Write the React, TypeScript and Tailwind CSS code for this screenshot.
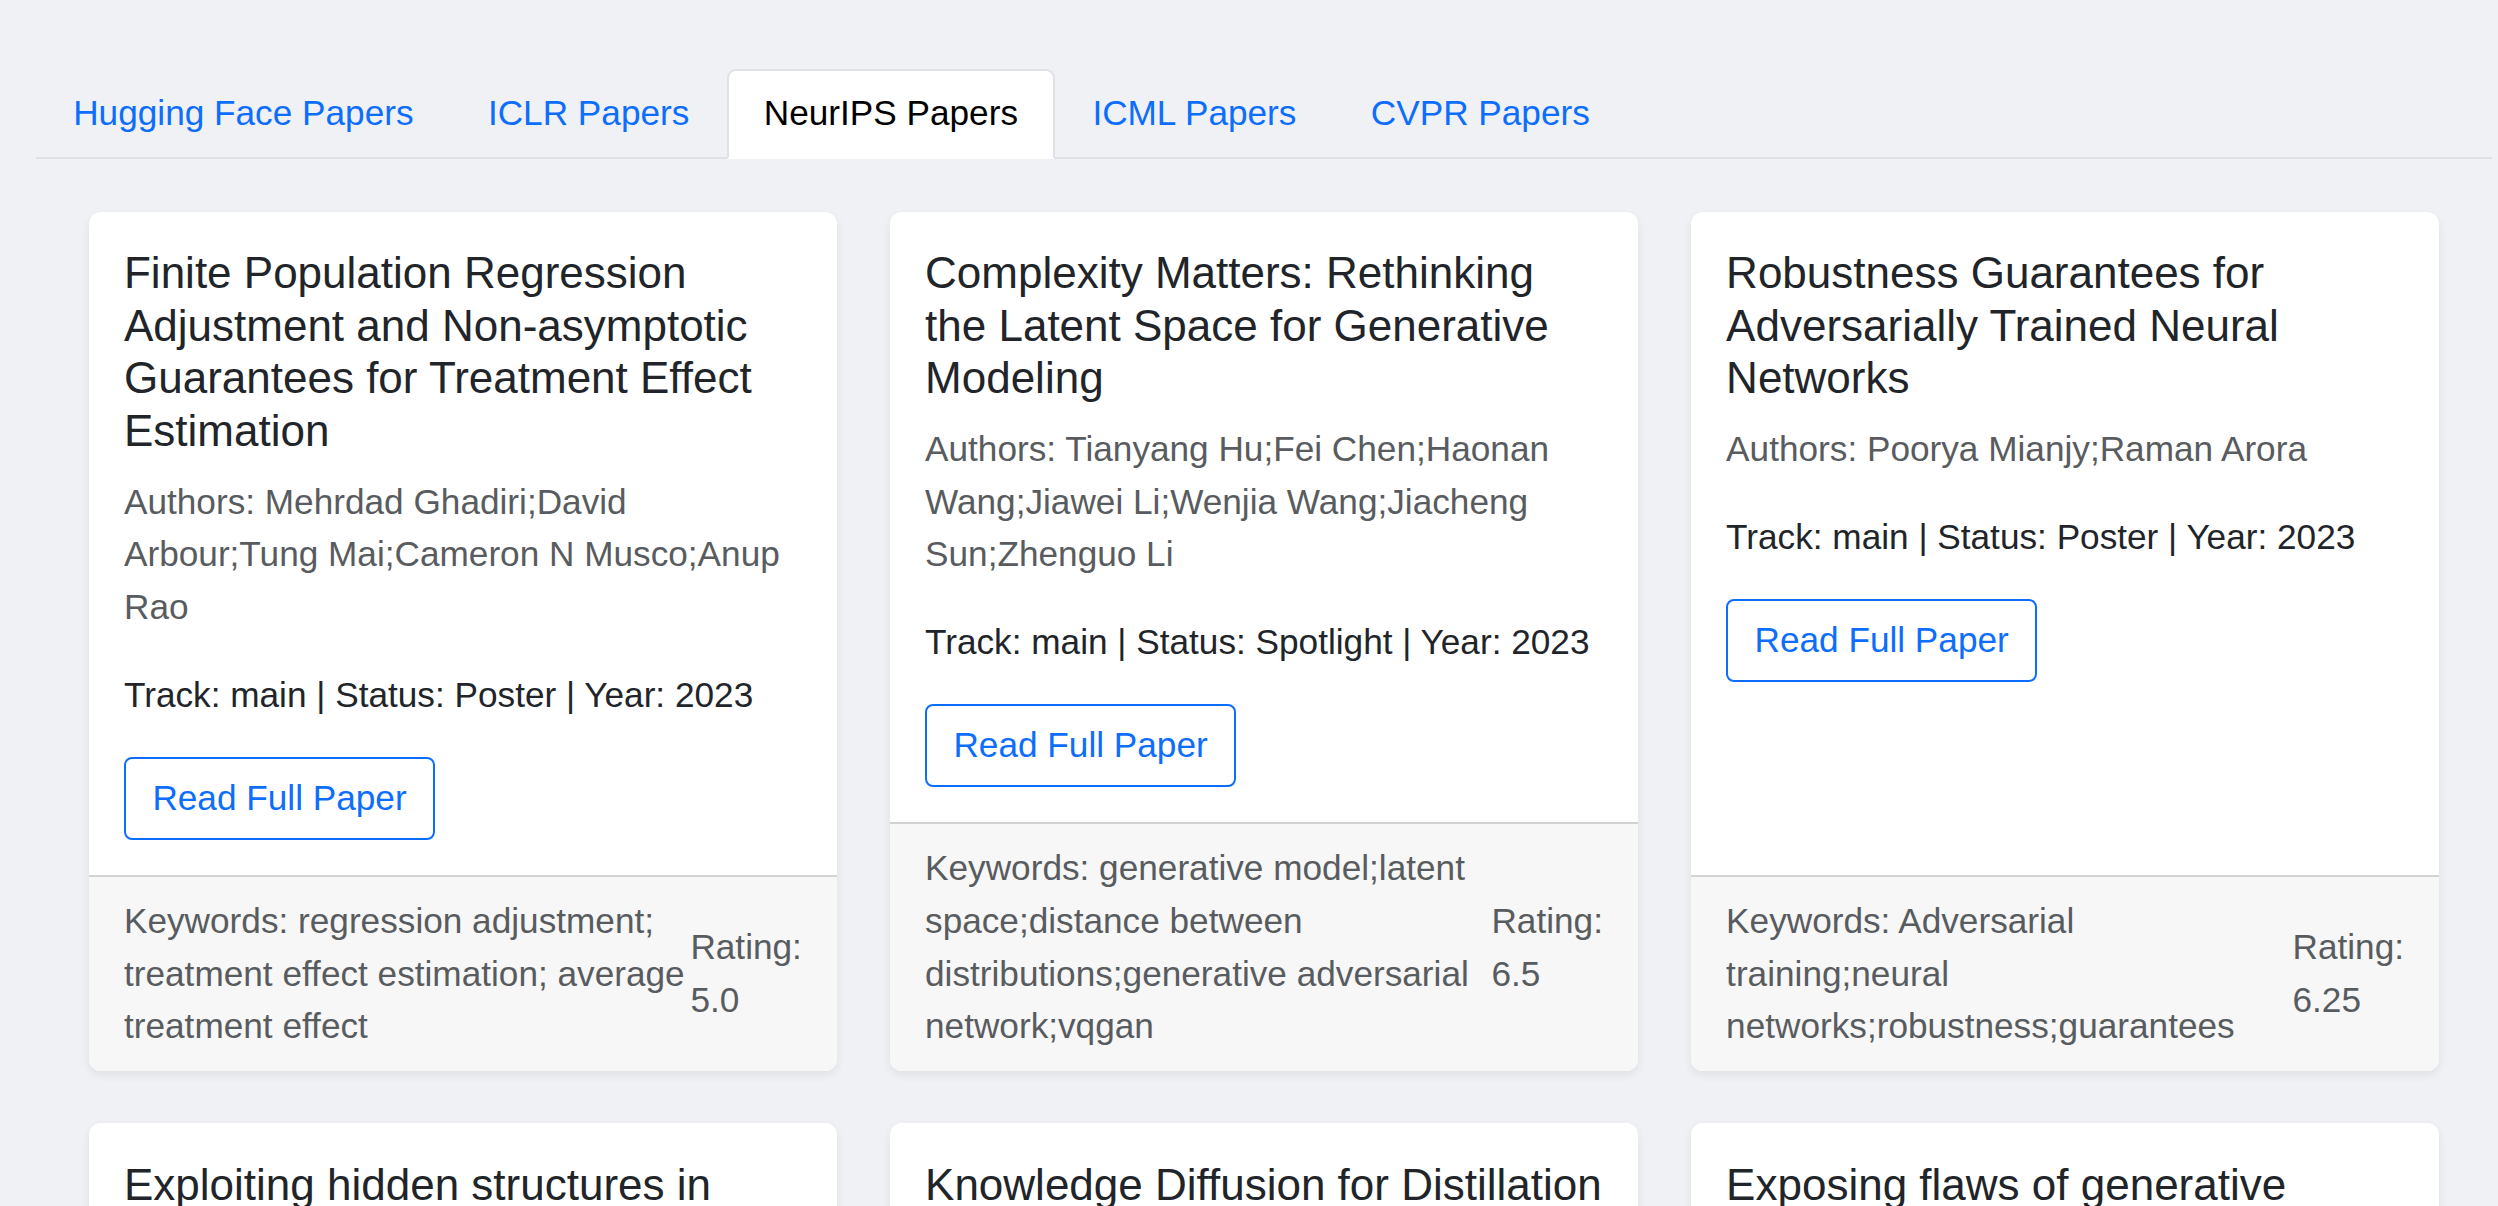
import React from "react";

type Paper = {
  title: string;
  authors: string;
  track: string;
  status: string;
  year: number;
  keywords: string;
  rating: string;
};

const tabs = ["Hugging Face Papers", "ICLR Papers", "NeurIPS Papers", "ICML Papers", "CVPR Papers"];

const papers: Paper[] = [
  {
    title: "Finite Population Regression Adjustment and Non-asymptotic Guarantees for Treatment Effect Estimation",
    authors: "Mehrdad Ghadiri;David Arbour;Tung Mai;Cameron N Musco;Anup Rao",
    track: "main",
    status: "Poster",
    year: 2023,
    keywords: "regression adjustment; treatment effect estimation; average treatment effect",
    rating: "5.0",
  },
  {
    title: "Complexity Matters: Rethinking the Latent Space for Generative Modeling",
    authors: "Tianyang Hu;Fei Chen;Haonan Wang;Jiawei Li;Wenjia Wang;Jiacheng Sun;Zhenguo Li",
    track: "main",
    status: "Spotlight",
    year: 2023,
    keywords: "generative model;latent space;distance between distributions;generative adversarial network;vqgan",
    rating: "6.5",
  },
  {
    title: "Robustness Guarantees for Adversarially Trained Neural Networks",
    authors: "Poorya Mianjy;Raman Arora",
    track: "main",
    status: "Poster",
    year: 2023,
    keywords: "Adversarial training;neural networks;robustness;guarantees",
    rating: "6.25",
  },
  {
    title: "Exploiting hidden structures in non-convex games for convergence to Nash equilibrium",
    authors: "Iosif Sakos;Emmanouil Vasileios Vlatakis-Gkaragkounis;Panayotis Mertikopoulos;Georgios Piliouras",
    track: "main",
    status: "Poster",
    year: 2023,
    keywords: "non-convex games;Nash equilibrium;learning in games",
    rating: "6.0",
  },
  {
    title: "Knowledge Diffusion for Distillation",
    authors: "Tao Huang;Yuan Zhang;Mingkai Zheng;Shan You;Fei Wang;Chen Qian;Chang Xu",
    track: "main",
    status: "Poster",
    year: 2023,
    keywords: "knowledge distillation;diffusion models",
    rating: "5.5",
  },
  {
    title: "Exposing flaws of generative model evaluation metrics and their unfair treatment of diffusion models",
    authors: "George Stein;Jesse C. Cresswell;Rasa Hosseinzadeh;Yi Sui;Brendan Leigh Ross",
    track: "main",
    status: "Poster",
    year: 2023,
    keywords: "generative models;evaluation;metrics;diffusion models",
    rating: "7.0",
  },
];

function PaperCard({ paper }: { paper: Paper }) {
  return (
    <div className="flex flex-col h-full bg-white rounded-[12px] shadow-[0_4px_10px_rgba(0,0,0,0.07)] overflow-hidden">
      {/* Body */}
      <div className="flex-1 p-[35.2px]">
        <h5 className="text-[44px] leading-[52.8px] text-[#212529] mb-[17.6px]">{paper.title}</h5>
        <h6 className="text-[35.2px] leading-[52.8px] text-[#595c5f] mb-[35.2px]">Authors: {paper.authors}</h6>
        <p className="text-[35.2px] leading-[52.8px] text-[#212529] mb-[35.2px]">
          Track: {paper.track} | Status: {paper.status} | Year: {paper.year}
        </p>
        <a
          href="#"
          className="inline-block border-2 border-[#0d6efd] text-[#0d6efd] rounded-[8px] px-[26.4px] py-[13px] text-[35.2px] leading-[52.8px]"
        >
          Read Full Paper
        </a>
      </div>

      {/* Footer */}
      <div className="flex justify-between items-center border-t-2 border-[#d2d2d3] bg-[#f7f7f7] px-[35.2px] py-[17.6px] text-[35.2px] leading-[52.8px] text-[#595c5f]">
        <div>Keywords: {paper.keywords}</div>
        <div>Rating: {paper.rating}</div>
      </div>
    </div>
  );
}

export default function App() {
  return (
    <div
      className="min-h-screen bg-[#f0f1f5] pt-[69px] pl-[36px] pr-[6px]"
      style={{ fontFamily: '"Liberation Sans", Arial, Helvetica, sans-serif' }}
    >
      {/* Tabs */}
      <ul className="flex border-b-2 border-[#dee2e6]">
        {tabs.map((tab) => {
          const active = tab === "NeurIPS Papers";
          return (
            <li key={tab} className="-mb-[2px]">
              <button
                className={
                  active
                    ? "block border-2 border-[#dee2e6] border-b-white bg-white rounded-t-[9px] px-[35.2px] pt-[16px] pb-[17px] text-[35.2px] leading-[52.8px] text-black"
                    : "block border-2 border-transparent rounded-t-[9px] px-[35.2px] pt-[16px] pb-[17px] text-[35.2px] leading-[52.8px] text-[#0d6efd]"
                }
              >
                {tab}
              </button>
            </li>
          );
        })}
      </ul>

      {/* Tab content */}
      <div className="p-[52.8px]">
        <div className="grid grid-cols-3 gap-[52.8px]">
          {papers.map((paper) => (
            <PaperCard key={paper.title} paper={paper} />
          ))}
        </div>
      </div>
    </div>
  );
}
